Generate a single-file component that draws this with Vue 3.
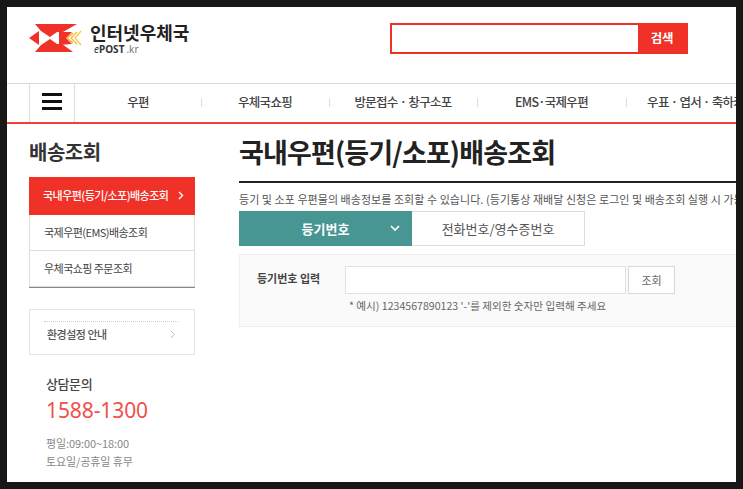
<template>
  <div class="frame">
    <div class="page">
      <header class="top">
        <div class="logo">
          <svg class="mark" width="58" height="30" viewBox="0 0 58 30">
            <path d="M6 0H48L34 8H28L21 13 12 7Z" fill="#f03127" />
            <path d="M6 28H44L33 20H28L21 15 12 21Z" fill="#f03127" />
            <path d="M0 14 10 7V21Z" fill="#f03127" />
            <path d="M30 8H43L37 14 43 20 30 21Z" fill="#f03127" />
            <path d="M44 9 38 14 44 19" fill="none" stroke="#f5a623" stroke-width="1.3" />
            <path d="M48 8 42 14 48 20" fill="none" stroke="#f7b731" stroke-width="1.3" />
            <path d="M52 7 46 14 52 21" fill="none" stroke="#f7c948" stroke-width="1.3" />
          </svg>
          <div class="logo-text">
            <div class="logo-ko">인터넷우체국</div>
            <div class="logo-en"><i>e</i><b>POST</b><span>.kr</span></div>
          </div>
        </div>
        <div class="search">
          <div class="search-field"></div>
          <div class="search-btn">검색</div>
        </div>
      </header>
      <nav class="nav">
        <div class="burger"><span></span><span></span><span></span></div>
        <div v-for="(item, i) in navItems" :key="item.label" class="nav-item" :class="{ sep: i > 0 }" :style="{ width: item.width + 'px' }">{{ item.label }}</div>
      </nav>
      <div class="body">
        <aside class="side">
          <h2 class="side-title">배송조회</h2>
          <ul class="menu">
            <li class="on">국내우편(등기/소포)배송조회<svg width="6" height="9" viewBox="0 0 6 9"><path d="M1 1l3.5 3.5L1 8" fill="none" stroke="#fff" stroke-width="1.4" /></svg></li>
            <li>국제우편(EMS)배송조회</li>
            <li>우체국쇼핑 주문조회</li>
          </ul>
          <div class="env">
            <div class="env-inner">환경설정 안내<svg width="6" height="9" viewBox="0 0 6 9"><path d="M1 1l3.5 3.5L1 8" fill="none" stroke="#bbb" stroke-width="1" /></svg></div>
          </div>
          <div class="contact">
            <div class="c-title">상담문의</div>
            <div class="c-tel">1588-1300</div>
            <div class="c-time first">평일:09:00~18:00</div>
            <div class="c-time">토요일/공휴일 휴무</div>
          </div>
        </aside>
        <main class="main">
          <h1 class="title">국내우편(등기/소포)배송조회</h1>
          <p class="desc">등기 및 소포 우편물의 배송정보를 조회할 수 있습니다. (등기통상 재배달 신청은 로그인 및 배송조회 실행 시 가능합니다.)</p>
          <div class="tabs">
            <div class="tab active">등기번호<svg width="10" height="7" viewBox="0 0 10 7"><path d="M1 1l4 4 4-4" fill="none" stroke="#fff" stroke-width="1.6" /></svg></div>
            <div class="tab">전화번호/영수증번호</div>
          </div>
          <div class="panel">
            <div class="label">등기번호 입력</div>
            <div class="fields">
              <div class="row">
                <div class="input"></div>
                <div class="btn">조회</div>
              </div>
              <div class="hint">* 예시) 1234567890123 '-'를 제외한 숫자만 입력해 주세요</div>
            </div>
          </div>
        </main>
      </div>
    </div>
  </div>
</template>

<script setup>
const navItems = [
  { label: '우편', width: 126 },
  { label: '우체국쇼핑', width: 128 },
  { label: '방문접수 · 창구소포', width: 148 },
  { label: 'EMS·국제우편', width: 149 },
  { label: '우표 · 엽서 · 축하카드', width: 150 }
]
</script>

<style>
html, body { margin: 0; background: #171717; }
</style>

<style scoped>
.frame {
  width: 743px;
  height: 489px;
  box-sizing: border-box;
  padding: 7px;
  background: #171717;
  overflow: hidden;
  font-family: "Noto Sans CJK KR", "Noto Sans", sans-serif;
}
.page { width: 729px; height: 475px; background: #fff; overflow: hidden; }
.top {
  height: 76px;
  display: flex;
  align-items: flex-start;
  box-sizing: border-box;
  padding-left: 22px;
}
.logo { display: flex; width: 361px; padding-top: 17px; align-items: flex-start; }
.logo-text { margin-left: 3px; }
.logo-ko { font-size: 18px; line-height: 16px; font-weight: 700; color: #222; white-space: nowrap; }
.logo-en { font-size: 10px; line-height: 10px; color: #333; margin: 4px 0 0 4px; font-family: "Noto Sans", sans-serif; }
.logo-en b { font-weight: 700; }
.logo-en span { color: #777; margin-left: 2px; }
.search {
  margin-top: 16px;
  width: 298px;
  height: 31px;
  display: flex;
  box-sizing: border-box;
  border: 2px solid #f03127;
}
.search-field { flex: 1; background: #fff; }
.search-btn {
  width: 48px;
  background: #f03127;
  color: #fff;
  font-size: 12.5px;
  font-weight: 700;
  line-height: 26px;
  text-align: center;
  letter-spacing: -0.3px;
}
.nav {
  height: 41px;
  box-sizing: border-box;
  border-top: 1px solid #d8d8d8;
  border-bottom: 2px solid #f0403a;
  display: flex;
  align-items: stretch;
  padding-left: 22px;
  white-space: nowrap;
}
.burger {
  width: 46px;
  flex: none;
  box-sizing: border-box;
  border-left: 1px solid #ddd;
  border-right: 1px solid #ddd;
  padding-bottom: 3px;
  display: flex;
  flex-direction: column;
  justify-content: center;
  align-items: center;
  gap: 4px;
}
.burger span { display: block; width: 20px; height: 3px; background: #111; }
.nav-item {
  flex: none;
  position: relative;
  text-align: center;
  font-size: 12.5px;
  font-weight: 500;
  line-height: 36px;
  color: #444;
  letter-spacing: -0.7px;
}
.nav-item.sep::before {
  content: "";
  position: absolute;
  left: 0;
  top: 14px;
  width: 1px;
  height: 9px;
  background: #ddd;
}
.body { display: flex; padding-left: 22px; }
.side { width: 166px; flex: none; }
.side-title {
  margin: 13px 0 0;
  font-size: 20px;
  line-height: 30px;
  font-weight: 700;
  color: #333;
  letter-spacing: -0.5px;
}
.menu {
  list-style: none;
  margin: 10px 0 0;
  padding: 0;
  border-bottom: 1px solid #888;
}
.menu li {
  height: 36px;
  box-sizing: border-box;
  border: 1px solid #ddd;
  border-top: none;
  padding-left: 14px;
  font-size: 11px;
  line-height: 35px;
  color: #444;
  letter-spacing: -0.55px;
  white-space: nowrap;
}
.menu li.on {
  height: 38px;
  border: none;
  background: #f03127;
  color: #fff;
  line-height: 37px;
  font-weight: 500;
}
.menu li.on svg { margin-left: 10px; }
.env {
  margin-top: 21px;
  height: 46px;
  box-sizing: border-box;
  border: 1px solid #e5e5e5;
  padding: 11px 16px 0 14px;
}
.env-inner {
  border-top: 1px dotted #ccc;
  display: flex;
  align-items: center;
  justify-content: space-between;
  height: 24px;
  font-size: 11px;
  font-weight: 500;
  color: #555;
  letter-spacing: -0.5px;
  padding: 0 2px 0 3px;
}
.contact { padding: 19px 0 0 17px; }
.c-title { font-size: 13px; line-height: 20px; font-weight: 500; color: #444; letter-spacing: -0.4px; }
.c-tel { font-size: 21px; line-height: 32px; color: #f0504a; font-family: "Noto Sans", sans-serif; letter-spacing: -0.1px; }
.c-time { font-size: 11px; line-height: 18px; color: #888; letter-spacing: -0.1px; white-space: nowrap; }
.c-time.first { margin-top: 8px; }
.main { width: 500px; margin-left: 44px; flex: none; }
.title {
  margin: 9px 0 0;
  height: 48px;
  box-sizing: border-box;
  font-size: 27px;
  line-height: 38px;
  font-weight: 700;
  color: #222;
  letter-spacing: -0.85px;
  white-space: nowrap;
}
.desc {
  margin: 0;
  padding-top: 8px;
  border-top: 2px solid #222;
  font-size: 11px;
  line-height: 16px;
  height: 30px;
  box-sizing: border-box;
  color: #555;
  white-space: nowrap;
  letter-spacing: 0.05px;
}
.tabs { display: flex; width: 346px; height: 35px; }
.tab {
  width: 173px;
  box-sizing: border-box;
  border: 1px solid #ddd;
  border-left: none;
  display: flex;
  align-items: center;
  justify-content: center;
  font-size: 13px;
  color: #555;
  white-space: nowrap;
}
.tab.active {
  position: relative;
  background: #479694;
  border: none;
  color: #fff;
  font-weight: 700;
}
.tab.active svg { position: absolute; right: 12px; top: 14px; }
.panel {
  margin-top: 8px;
  height: 73px;
  box-sizing: border-box;
  background: #fafafa;
  border: 1px solid #efefef;
  display: flex;
  padding: 11px 0 0 17px;
}
.label { width: 88px; flex: none; font-size: 11px; font-weight: 700; color: #444; line-height: 24px; }
.row { display: flex; gap: 2px; }
.input { width: 281px; height: 28px; box-sizing: border-box; background: #fff; border: 1px solid #e2e2e2; }
.btn {
  width: 47px;
  height: 28px;
  box-sizing: border-box;
  background: #fff;
  border: 1px solid #d8d8d8;
  font-size: 11px;
  line-height: 26px;
  text-align: center;
  color: #666;
}
.hint { font-size: 10.6px; line-height: 16px; margin: 4px 0 0 4px; color: #666; white-space: nowrap; }
</style>
